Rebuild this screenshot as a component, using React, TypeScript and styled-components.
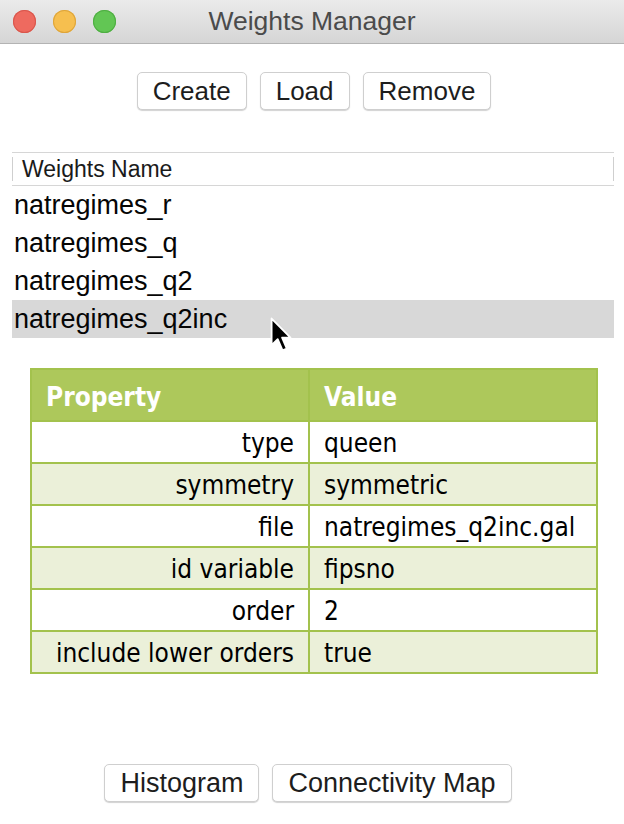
import React from "react";
import styled, { createGlobalStyle } from "styled-components";

const Global = createGlobalStyle`
  html, body { margin: 0; padding: 0; background: #ffffff; }
  body { font-family: "Liberation Sans", Arial, sans-serif; }
`;

const Window = styled.div`
  width: 624px;
  height: 824px;
  display: flex;
  flex-direction: column;
  background: #ffffff;
  overflow: hidden;
`;

const TitleBar = styled.div`
  height: 43px;
  flex: none;
  display: flex;
  align-items: center;
  position: relative;
  background: linear-gradient(#ebebeb, #d5d5d5);
  border-bottom: 1px solid #b3b3b3;
`;

const Lights = styled.div`
  display: flex;
  gap: 17px;
  padding-left: 13px;
`;

const Light = styled.span<{ $c: string; $b: string }>`
  width: 23px;
  height: 23px;
  border-radius: 50%;
  background: ${(p) => p.$c};
  box-shadow: inset 0 0 0 1px ${(p) => p.$b};
`;

const Title = styled.div`
  position: absolute;
  left: 0;
  right: 0;
  text-align: center;
  font-size: 26.5px;
  color: #4b4b4b;
  pointer-events: none;
`;

const ButtonRow = styled.div`
  display: flex;
  justify-content: center;
  gap: 13px;
  padding-top: 28px;
  padding-left: 4px;
`;

const Button = styled.button`
  height: 38px;
  padding: 0 15px;
  font-family: "Liberation Sans", Arial, sans-serif;
  font-size: 26px;
  color: #1d1d1d;
  background: #ffffff;
  border: 1px solid #cfcfcf;
  border-radius: 5px;
  box-shadow: 0 1px 1px rgba(0, 0, 0, 0.18);
  line-height: 1;
`;

const List = styled.div`
  position: relative;
  margin: 42px 10px 0 12px;
`;

const ListHeader = styled.div`
  height: 32px;
  display: flex;
  align-items: center;
  border-top: 1px solid #d6d6d6;
  border-bottom: 1px solid #d6d6d6;
  font-size: 23px;
  color: #1a1a1a;
  padding-left: 10px;
  position: relative;
  &::before, &::after {
    content: "";
    position: absolute;
    top: 4px;
    bottom: 4px;
    width: 1px;
    background: #cfcfcf;
  }
  &::before { left: 0; }
  &::after { right: 0; }
`;

const Row = styled.div<{ $sel?: boolean }>`
  height: 38px;
  display: flex;
  align-items: center;
  padding-left: 2px;
  font-size: 27px;
  color: #050505;
  background: ${(p) => (p.$sel ? "#d8d8d8" : "transparent")};
`;

const Cursor = styled.svg`
  position: absolute;
  left: 258px;
  top: 165px;
`;

const Table = styled.table`
  margin: 30px 26px 0 30px;
  border-collapse: collapse;
  border: 2px solid #a3c24d;
  font-family: "DejaVu Sans Condensed", "DejaVu Sans", sans-serif;
  font-size: 26px;
  color: #000000;
`;

const Th = styled.th`
  height: 47px;
  padding: 3px 14px 0;
  background: #adc85b;
  color: #ffffff;
  font-weight: bold;
  text-align: left;
  border: 2px solid #a3c24d;
`;

const Td = styled.td<{ $right?: boolean; $alt?: boolean }>`
  height: 39px;
  padding: 1px 14px 0;
  text-align: ${(p) => (p.$right ? "right" : "left")};
  background: ${(p) => (p.$alt ? "#ebf0d9" : "#ffffff")};
  border: 2px solid #a3c24d;
  white-space: nowrap;
`;

const Footer = styled.div`
  margin-top: auto;
  padding: 0 8px 22px 0;
  display: flex;
  justify-content: center;
  gap: 13px;
`;

const FooterButton = styled(Button)`
  padding: 0 15px;
  font-size: 27px;
`;

const names = ["natregimes_r", "natregimes_q", "natregimes_q2", "natregimes_q2inc"];

const props: [string, string][] = [
  ["type", "queen"],
  ["symmetry", "symmetric"],
  ["file", "natregimes_q2inc.gal"],
  ["id variable", "fipsno"],
  ["order", "2"],
  ["include lower orders", "true"],
];

export default function App() {
  return (
    <Window>
      <Global />
      <TitleBar>
        <Lights>
          <Light $c="#ee6a5f" $b="#d9574d" />
          <Light $c="#f6bf4f" $b="#dea53b" />
          <Light $c="#62c654" $b="#4fae43" />
        </Lights>
        <Title>Weights Manager</Title>
      </TitleBar>
      <ButtonRow>
        <Button>Create</Button>
        <Button>Load</Button>
        <Button>Remove</Button>
      </ButtonRow>
      <List>
        <ListHeader>Weights Name</ListHeader>
        {names.map((n, i) => (
          <Row key={n} $sel={i === 3}>
            {n}
          </Row>
        ))}
        <Cursor width="26" height="38" viewBox="0 0 17 25">
          <path
            d="M1 1 L1 18.5 L5 14.6 L8.2 22 L11 20.8 L7.9 13.6 L13.4 13.6 Z"
            fill="#000"
            stroke="#fff"
            strokeWidth="1.2"
            strokeLinejoin="round"
          />
        </Cursor>
      </List>
      <Table>
        <thead>
          <tr>
            <Th style={{ width: 248 }}>Property</Th>
            <Th>Value</Th>
          </tr>
        </thead>
        <tbody>
          {props.map(([k, v], i) => (
            <tr key={k}>
              <Td $right $alt={i % 2 === 1}>{k}</Td>
              <Td $alt={i % 2 === 1}>{v}</Td>
            </tr>
          ))}
        </tbody>
      </Table>
      <Footer>
        <FooterButton>Histogram</FooterButton>
        <FooterButton>Connectivity Map</FooterButton>
      </Footer>
    </Window>
  );
}
